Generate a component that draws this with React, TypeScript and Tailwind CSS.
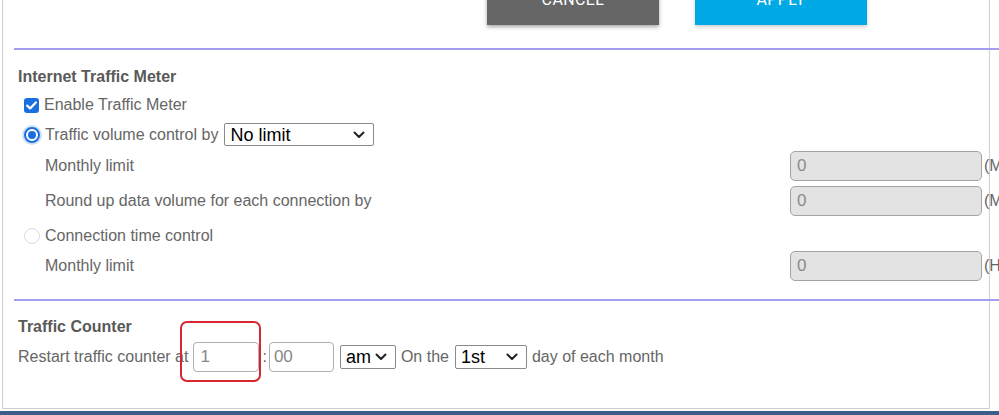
import React from "react"

const font = { fontFamily: '"Liberation Sans", Arial, sans-serif' }

function Chevron() {
  return (
    <svg width="12" height="8" viewBox="0 0 12 8" className="shrink-0">
      <path d="M1.5 1.5 L6 6 L10.5 1.5" fill="none" stroke="#222" strokeWidth="2" strokeLinecap="round" strokeLinejoin="round" />
    </svg>
  )
}

function FakeSelect({ value, width, height }: { value: string; width: string; height: string }) {
  return (
    <div
      className={`flex items-center justify-between border border-[#8a8a8a] rounded-[2px] bg-white pl-[5px] pr-[8px] text-[18px] leading-none text-black ${width} ${height}`}
    >
      <span>{value}</span>
      <Chevron />
    </div>
  )
}

function GrayInput({ unit }: { unit: string }) {
  return (
    <div className="flex items-center shrink-0">
      <div className="w-[192px] h-[30px] rounded-[5px] border-[1.5px] border-[#a3a3a3] bg-[#e3e3e3] pl-[6px] flex items-center text-[17px] text-[#8b8b8b]">
        0
      </div>
      <span className="ml-[2px] text-[16px] text-[#666] whitespace-nowrap">{unit}</span>
    </div>
  )
}

function Row({ label, unit }: { label: string; unit: string }) {
  return (
    <div className="flex items-center h-[30px] mt-[5px]">
      <span className="w-[776px] shrink-0 pl-[31px] text-[16px] text-[#666]">{label}</span>
      <GrayInput unit={unit} />
    </div>
  )
}

export default function App() {
  return (
    <div className="w-[999px] h-[415px] overflow-hidden bg-white" style={font}>
      <div className="ml-[2px] w-[988px] h-[409px] border-l border-r border-b border-[#d0d0d0]">
        <div className="pl-[11px]">
          {/* buttons (cut off at top) */}
          <div className="h-[48px] flex items-start pl-[473px] gap-[36px]">
            <button className="w-[172px] h-[50px] -mt-[25px] bg-[#666666] text-white text-[16px] tracking-wide shadow-[0_2px_4px_rgba(0,0,0,0.35)]" style={{ fontFamily: "Roboto, Arial, sans-serif" }}>
              CANCEL
            </button>
            <button className="w-[172px] h-[50px] -mt-[25px] bg-[#00a9e5] text-white text-[16px] tracking-wide shadow-[0_2px_4px_rgba(0,0,0,0.2)]" style={{ fontFamily: "Roboto, Arial, sans-serif" }}>
              APPLY
            </button>
          </div>
          <div className="h-[2px] bg-[#a39ef0] -mr-[12px]" />

          {/* Internet Traffic Meter */}
          <div className="mt-[17px] h-[20px] pl-[4px] text-[16px] font-bold text-[#595959] leading-[20px]">
            Internet Traffic Meter
          </div>
          <div className="mt-[8px] h-[20px] flex items-center pl-[10px]">
            <span className="w-[15px] h-[15px] rounded-[3px] bg-[#1a6fe0] flex items-center justify-center">
              <svg width="11" height="9" viewBox="0 0 11 9">
                <path d="M1.2 4.6 L4.1 7.4 L9.8 1.4" fill="none" stroke="white" strokeWidth="2.2" strokeLinecap="round" strokeLinejoin="round" />
              </svg>
            </span>
            <span className="ml-[5px] text-[16px] text-[#666]">Enable Traffic Meter</span>
          </div>
          <div className="mt-[8px] h-[23px] flex items-center pl-[10px]">
            <span className="w-[16px] h-[16px] rounded-full border-[2px] border-[#1a6fe0] bg-white flex items-center justify-center shadow-[0_0_0_2px_#cfe0fb]">
              <span className="w-[8px] h-[8px] rounded-full bg-[#1a6fe0]" />
            </span>
            <span className="ml-[5px] text-[16px] text-[#666]">Traffic volume control by</span>
            <div className="ml-[6px]">
              <FakeSelect value="No limit" width="w-[150px]" height="h-[23px]" />
            </div>
          </div>
          <Row label="Monthly limit" unit="(MBytes)" />
          <Row label="Round up data volume for each connection by" unit="(MBytes)" />
          <div className="mt-[10px] h-[20px] flex items-center pl-[10px]">
            <span className="w-[16px] h-[16px] rounded-full border border-[#dedede] bg-white" />
            <span className="ml-[5px] text-[16px] text-[#666]">Connection time control</span>
          </div>
          <Row label="Monthly limit" unit="(Hours)" />

          <div className="mt-[18px] h-[2px] bg-[#a39ef0] -mr-[12px]" />

          {/* Traffic Counter */}
          <div className="mt-[16px] h-[20px] pl-[4px] text-[16px] font-bold text-[#595959] leading-[20px]">
            Traffic Counter
          </div>
          <div className="mt-[5px] h-[30px] flex items-center pl-[4px] text-[16px] text-[#666]">
            <span>Restart traffic counter at</span>
            <div className="relative ml-[5px]">
              <div className="w-[66px] h-[30px] rounded-[4px] border border-[#b0b0b0] pl-[6px] flex items-center text-[17px] text-[#888]">
                1
              </div>
              <div className="absolute -left-[13px] -top-[21px] w-[81px] h-[61px] rounded-[7px] border-2 border-[#d8262c]" />
            </div>
            <span className="ml-[3px] mr-[2px]">:</span>
            <div className="w-[65px] h-[30px] rounded-[4px] border border-[#b0b0b0] pl-[4px] flex items-center text-[17px] text-[#888]">
              00
            </div>
            <div className="ml-[6px]">
              <FakeSelect value="am" width="w-[56px]" height="h-[24px]" />
            </div>
            <span className="ml-[5px]">On the</span>
            <div className="ml-[6px]">
              <FakeSelect value="1st" width="w-[72px]" height="h-[24px]" />
            </div>
            <span className="ml-[5px]">day of each month</span>
          </div>
        </div>
      </div>
      <div className="mt-[2px] h-[4px] bg-[#3b5d88]" />
    </div>
  )
}
